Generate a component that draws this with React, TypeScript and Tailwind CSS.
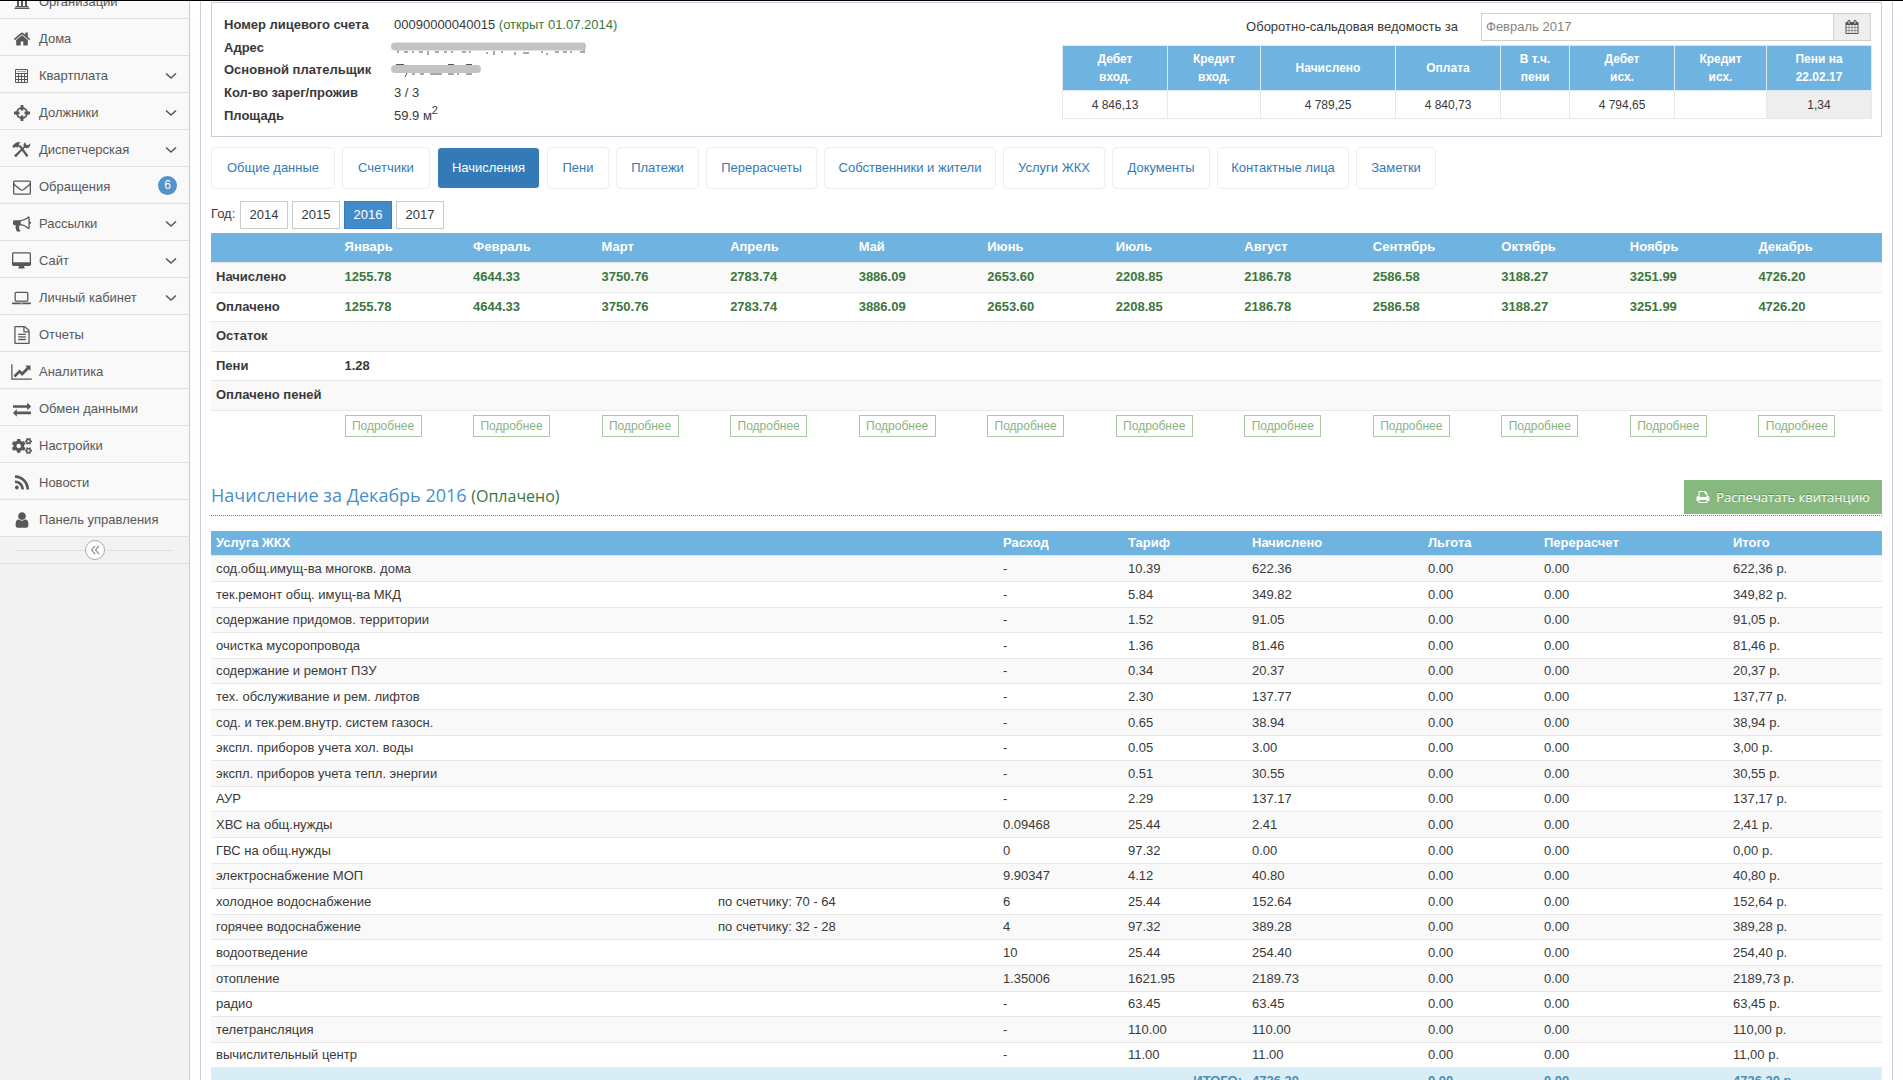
import React, { useState } from 'react';
import { FaCogs, FaUniversity } from 'react-icons/fa';

type IconProps = {
  path: string;
  viewBox?: string;
  className?: string;
};

type MenuItem = {
  title: string;
  icon: React.ReactNode;
  opens?: boolean;
  badge?: number;
};

type Service = {
  name: string;
  meter?: string;
  usage: string;
  tariff: string;
  charged: string;
};

const Icon: React.FC<IconProps> = ({ path, viewBox = '0 0 1792 1792', className = 'size-[18px]' }) => (
  <svg viewBox={viewBox} className={className} fill="currentColor" aria-hidden="true">
    <path d={path} />
  </svg>
);

const paths = {
  home: 'M1472 992v480q0 26-19 45t-45 19h-384v-384h-256v384h-384q-26 0-45-19t-19-45v-480q0-1 .5-3t.5-3l575-474 575 474q1 2 1 6zm223-69l-62 74q-8 9-21 11h-3q-13 0-21-7l-692-577-692 577q-12 8-24 7-13-2-21-11l-62-74q-8-10-7-23.5t11-21.5l719-599q32-26 76-26t76 26l244 204v-195q0-14 9-23t23-9h192q14 0 23 9t9 23v408l219 182q10 8 11 21.5t-7 23.5z',
  envelope: 'M1664 1504v-768q-32 36-69 66-268 206-426 338-51 43-83 67t-86.5 48.5-102.5 24.5h-2q-48 0-102.5-24.5t-86.5-48.5-83-67q-158-132-426-338-37-30-69-66v768q0 13 9.5 22.5t22.5 9.5h1472q13 0 22.5-9.5t9.5-22.5zm0-1051v-24.5l-.5-13-3-12.5-5.5-9-9-7.5-14-2.5h-1472q-13 0-22.5 9.5t-9.5 22.5q0 168 147 284 193 152 401 317 6 5 35 29.5t46 37.5 44.5 31.5 50.5 27.5 43 9h2q20 0 43-9t50.5-27.5 44.5-31.5 46-37.5 35-29.5q208-165 401-317 54-43 100.5-115.5t46.5-131.5zm128-37v1088q0 66-47 113t-113 47h-1472q-66 0-113-47t-47-113v-1088q0-66 47-113t113-47h1472q66 0 113 47t47 113z',
  bullhorn: 'M1664 640q53 0 90.5 37.5t37.5 90.5-37.5 90.5-90.5 37.5v384q0 52-38 90t-90 38q-417-347-812-380-58 19-91 66t-31 100.5 40 92.5q-20 33-23 65.5t6 58 33.5 55 48 50 61.5 50.5q-29 58-111.5 83t-168.5 11.5-132-55.5q-7-23-29.5-87.5t-32-94.5-23-89-15-101 3.5-98.5 22-110.5h-122q-66 0-113-47t-47-113v-192q0-66 47-113t113-47h480q435 0 896-384 52 0 90 38t38 90v384zm-128 604v-954q-394 302-768 343v270q377 42 768 341z',
  desktop: 'M1728 992v-832q0-13-9.5-22.5t-22.5-9.5h-1600q-13 0-22.5 9.5t-9.5 22.5v832q0 13 9.5 22.5t22.5 9.5h1600q13 0 22.5-9.5t9.5-22.5zm128-832v1088q0 66-47 113t-113 47h-544q0 37 16 77.5t32 71 16 43.5q0 26-19 45t-45 19h-512q-26 0-45-19t-19-45q0-14 16-44t32-70 16-78h-544q-66 0-113-47t-47-113v-1088q0-66 47-113t113-47h1600q66 0 113 47t47 113z',
  laptop: 'M416 1280q-66 0-113-47t-47-113v-704q0-66 47-113t113-47h1088q66 0 113 47t47 113v704q0 66-47 113t-113 47h-1088zm-32-864v704q0 13 9.5 22.5t22.5 9.5h1088q13 0 22.5-9.5t9.5-22.5v-704q0-13-9.5-22.5t-22.5-9.5h-1088q-13 0-22.5 9.5t-9.5 22.5zm1376 928h160v96q0 40-47 68t-113 28h-1600q-66 0-113-28t-47-68v-96h1760zm-720 96q16 0 16-16t-16-16h-160q-16 0-16 16t16 16h160z',
  file: 'M1596 380q28 28 48 76t20 88v1152q0 40-28 68t-68 28h-1344q-40 0-68-28t-28-68v-1600q0-40 28-68t68-28h896q40 0 88 20t76 48zm-444-244v376h376q-10-29-22-41l-313-313q-12-12-41-22zm384 1528v-1024h-416q-40 0-68-28t-28-68v-416h-768v1536h1280zm-1024-864q0-14 9-23t23-9h704q14 0 23 9t9 23v64q0 14-9 23t-23 9h-704q-14 0-23-9t-9-23v-64zm736 224q14 0 23 9t9 23v64q0 14-9 23t-23 9h-704q-14 0-23-9t-9-23v-64q0-14 9-23t23-9h704zm0 256q14 0 23 9t9 23v64q0 14-9 23t-23 9h-704q-14 0-23-9t-9-23v-64q0-14 9-23t23-9h704z',
  chart: 'M2048 1536v128h-2048v-1536h128v1408h1920zm-128-1248v435q0 21-19.5 29.5t-35.5-7.5l-121-121-633 633q-10 10-23 10t-23-10l-233-233-416 416-192-192 585-585q10-10 23-10t23 10l233 233 464-464-121-121q-16-16-7.5-35.5t29.5-19.5h435q14 0 23 9t9 23z',
  exchange: 'M1792 1184v192q0 13-9.5 22.5t-22.5 9.5h-1376v192q0 13-9.5 22.5t-22.5 9.5q-12 0-24-10l-319-320q-9-9-9-22 0-14 9-23l320-320q9-9 23-9 13 0 22.5 9.5t9.5 22.5v192h1376q13 0 22.5 9.5t9.5 22.5zm0-544q0 14-9 23l-320 320q-9 9-23 9-13 0-22.5-9.5t-9.5-22.5v-192h-1376q-13 0-22.5-9.5t-9.5-22.5v-192q0-13 9.5-22.5t22.5-9.5h1376v-192q0-14 9-23t23-9q12 0 24 10l319 319q9 9 9 23z',
  rss: 'M576 1344q0 80-56 136t-136 56-136-56-56-136 56-136 136-56 136 56 56 136zm512 123q2 28-17 48-18 21-47 21h-135q-25 0-43-16.5t-20-41.5q-22-229-184.5-391.5t-391.5-184.5q-25-2-41.5-20t-16.5-43v-135q0-29 21-47 17-17 43-17h5q160 13 306 80.5t259 181.5q114 113 181.5 259t80.5 306zm512 2q2 27-18 47-18 20-46 20h-143q-26 0-44.5-17.5t-19.5-42.5q-12-215-101-408.5t-231.5-336-336-231.5-408.5-102q-25-1-42.5-19.5t-17.5-43.5v-143q0-28 20-46 18-18 44-18h3q262 13 501.5 120t425.5 294q187 186 294 425.5t120 501.5z',
  user: 'M1536 1399q0 109-62.5 187t-150.5 78h-854q-88 0-150.5-78t-62.5-187q0-85 8.5-160.5t31.5-152 58.5-131 94-89 134.5-34.5q131 128 313 128t313-128q76 0 134.5 34.5t94 89 58.5 131 31.5 152 8.5 160.5zm-256-887q0 159-112.5 271.5t-271.5 112.5-271.5-112.5-112.5-271.5 112.5-271.5 271.5-112.5 271.5 112.5 112.5 271.5z',
  print: 'M448 1536h896v-256h-896v256zm0-640h896v-384h-160q-40 0-68-28t-28-68v-160h-640v640zm1152 64q0-26-19-45t-45-19-45 19-19 45 19 45 45 19 45-19 19-45zm128 0v416q0 13-9.5 22.5t-22.5 9.5h-224v160q0 40-28 68t-68 28h-960q-40 0-68-28t-28-68v-160h-224q-13 0-22.5-9.5t-9.5-22.5v-416q0-79 56.5-135.5t135.5-56.5h64v-544q0-40 28-68t68-28h672q40 0 88 20t76 48l152 152q28 28 48 76t20 88v256h64q79 0 135.5 56.5t56.5 135.5z',
  calendar: 'M192 1664h288v-288h-288v288zm352 0h320v-288h-320v288zm-352-352h288v-320h-288v320zm352 0h320v-320h-320v320zm-352-384h288v-288h-288v288zm736 736h320v-288h-320v288zm-384-736h320v-288h-320v288zm768 736h288v-288h-288v288zm-384-352h320v-320h-320v320zm-352-864v-288q0-13-9.5-22.5t-22.5-9.5h-64q-13 0-22.5 9.5t-9.5 22.5v288q0 13 9.5 22.5t22.5 9.5h64q13 0 22.5-9.5t9.5-22.5zm736 864h288v-320h-288v320zm-384-384h320v-288h-320v288zm384 0h288v-288h-288v288zm32-480v-288q0-13-9.5-22.5t-22.5-9.5h-64q-13 0-22.5 9.5t-9.5 22.5v288q0 13 9.5 22.5t22.5 9.5h64q13 0 22.5-9.5t9.5-22.5zm384-64v1280q0 52-38 90t-90 38h-1408q-52 0-90-38t-38-90v-1280q0-52 38-90t90-38h128v-96q0-66 47-113t113-47h64q66 0 113 47t47 113v96h384v-96q0-66 47-113t113-47h64q66 0 113 47t47 113v96h128q52 0 90 38t38 90z',
};

const CalculatorIcon = () => (
  <svg viewBox="0 0 13 14" className="h-[14px] w-[13px]" fill="none" stroke="currentColor" aria-hidden="true">
    <path d="M.5 .5h12v13h-12zM.5 4.5h12M1 7.5h11M1 10.5h11M3.5 5v8M6.5 5v8M9.5 5v8" />
    <path d="M2 2.5h9" strokeOpacity=".5" />
  </svg>
);

const TargetIcon = () => (
  <svg viewBox="0 0 16 16" className="size-4" fill="none" stroke="currentColor" aria-hidden="true">
    <circle cx="8" cy="8" r="5.2" strokeWidth="1.7" />
    <path d="M8 0v5.5M8 10.5V16M0 8h5.5M10.5 8H16" strokeWidth="2.8" />
  </svg>
);

const ToolsIcon = () => (
  <svg viewBox="0 0 58 52" className="h-[17px] w-[19px]" fill="currentColor" aria-hidden="true">
    <path d="M1 15l6-6Q15 1 27 4q-5 2-6 6l3 4-7 7-4-3-5 1-3 3z" />
    <path d="M21 17l5-5 24 32-5 6z" />
    <path d="M43 3q-8 2-8 11l1 3L6 44l6 6 27-29q8 3 14-3 4-4 3-11l-7 6-7-2-1-6z" />
  </svg>
);

const ChevronIcon = () => (
  <svg viewBox="0 0 12 8" className="ml-auto h-2 w-3" fill="none" stroke="currentColor" strokeWidth="1.6" aria-hidden="true">
    <path d="M1 1.5l5 4.5 5-4.5" />
  </svg>
);

const menu: MenuItem[] = [
  { title: 'Организации', icon: <FaUniversity className="size-4" /> },
  { title: 'Дома', icon: <Icon path={paths.home} /> },
  { title: 'Квартплата', icon: <CalculatorIcon />, opens: true },
  { title: 'Должники', icon: <TargetIcon />, opens: true },
  { title: 'Диспетчерская', icon: <ToolsIcon />, opens: true },
  { title: 'Обращения', icon: <Icon path={paths.envelope} />, badge: 6 },
  { title: 'Рассылки', icon: <Icon path={paths.bullhorn} />, opens: true },
  { title: 'Сайт', icon: <Icon path={paths.desktop} viewBox="-64 0 1920 1792" className="h-[18px] w-[19px]" />, opens: true },
  { title: 'Личный кабинет', icon: <Icon path={paths.laptop} viewBox="0 0 1920 1792" className="h-[18px] w-[19px]" />, opens: true },
  { title: 'Отчеты', icon: <Icon path={paths.file} /> },
  { title: 'Аналитика', icon: <Icon path={paths.chart} viewBox="0 0 2048 1792" className="h-[18px] w-[21px]" /> },
  { title: 'Обмен данными', icon: <Icon path={paths.exchange} /> },
  { title: 'Настройки', icon: <FaCogs className="size-5" /> },
  { title: 'Новости', icon: <Icon path={paths.rss} /> },
  { title: 'Панель управления', icon: <Icon path={paths.user} /> },
];

const tabs = [
  { title: 'Общие данные', width: 'w-[124px]' },
  { title: 'Счетчики', width: 'w-[88px]' },
  { title: 'Начисления', width: 'w-[103px]' },
  { title: 'Пени', width: 'w-[62px]' },
  { title: 'Платежи', width: 'w-[83px]' },
  { title: 'Перерасчеты', width: 'w-[111px]' },
  { title: 'Собственники и жители', width: 'w-[172px]' },
  { title: 'Услуги ЖКХ', width: 'w-[102px]' },
  { title: 'Документы', width: 'w-[98px]' },
  { title: 'Контактные лица', width: 'w-[132px]' },
  { title: 'Заметки', width: 'w-[80px]' },
];

const years = ['2014', '2015', '2016', '2017'];

const months = [
  { name: 'Январь', sum: '1255.78', fine: '1.28' },
  { name: 'Февраль', sum: '4644.33' },
  { name: 'Март', sum: '3750.76' },
  { name: 'Апрель', sum: '2783.74' },
  { name: 'Май', sum: '3886.09' },
  { name: 'Июнь', sum: '2653.60' },
  { name: 'Июль', sum: '2208.85' },
  { name: 'Август', sum: '2186.78' },
  { name: 'Сентябрь', sum: '2586.58' },
  { name: 'Октябрь', sum: '3188.27' },
  { name: 'Ноябрь', sum: '3251.99' },
  { name: 'Декабрь', sum: '4726.20' },
];

const services: Service[] = [
  { name: 'сод.общ.имущ-ва многокв. дома', usage: '-', tariff: '10.39', charged: '622.36' },
  { name: 'тек.ремонт общ. имущ-ва МКД', usage: '-', tariff: '5.84', charged: '349.82' },
  { name: 'содержание придомов. территории', usage: '-', tariff: '1.52', charged: '91.05' },
  { name: 'очистка мусоропровода', usage: '-', tariff: '1.36', charged: '81.46' },
  { name: 'содержание и ремонт ПЗУ', usage: '-', tariff: '0.34', charged: '20.37' },
  { name: 'тех. обслуживание и рем. лифтов', usage: '-', tariff: '2.30', charged: '137.77' },
  { name: 'сод. и тек.рем.внутр. систем газосн.', usage: '-', tariff: '0.65', charged: '38.94' },
  { name: 'экспл. приборов учета хол. воды', usage: '-', tariff: '0.05', charged: '3.00' },
  { name: 'экспл. приборов учета тепл. энергии', usage: '-', tariff: '0.51', charged: '30.55' },
  { name: 'АУР', usage: '-', tariff: '2.29', charged: '137.17' },
  { name: 'ХВС на общ.нужды', usage: '0.09468', tariff: '25.44', charged: '2.41' },
  { name: 'ГВС на общ.нужды', usage: '0', tariff: '97.32', charged: '0.00' },
  { name: 'электроснабжение МОП', usage: '9.90347', tariff: '4.12', charged: '40.80' },
  { name: 'холодное водоснабжение', meter: 'по счетчику: 70 - 64', usage: '6', tariff: '25.44', charged: '152.64' },
  { name: 'горячее водоснабжение', meter: 'по счетчику: 32 - 28', usage: '4', tariff: '97.32', charged: '389.28' },
  { name: 'водоотведение', usage: '10', tariff: '25.44', charged: '254.40' },
  { name: 'отопление', usage: '1.35006', tariff: '1621.95', charged: '2189.73' },
  { name: 'радио', usage: '-', tariff: '63.45', charged: '63.45' },
  { name: 'телетрансляция', usage: '-', tariff: '110.00', charged: '110.00' },
  { name: 'вычислительный центр', usage: '-', tariff: '11.00', charged: '11.00' },
];

const Sidebar = () => (
  <aside className="w-[190px] shrink-0 overflow-hidden border-r border-[#ccc] bg-[#f2f2f2] text-[#585858]">
    {/* The list is scrolled a little under the top edge */}
    <nav className="-mt-[19px]">
      <ul>
        {menu.map((item) => (
          <li key={item.title} className="border-b border-[#e0e0e0] bg-[#f9f9f9]">
            <a href="#" className="flex h-9 items-center pt-[3px] pr-3">
              <span className="flex w-[39px] shrink-0 items-center justify-center pl-1">{item.icon}</span>
              <span className="whitespace-nowrap">{item.title}</span>
              {item.opens && <ChevronIcon />}
              {item.badge && (
                <span className="mb-[3px] ml-auto flex size-[19px] items-center justify-center rounded-full bg-[#5293c9] text-xs text-white">
                  {item.badge}
                </span>
              )}
            </a>
          </li>
        ))}
      </ul>
    </nav>
    <div className="flex h-[27px] items-center border-b border-[#e0e0e0] px-[15px]">
      <span className="h-px grow bg-[#e0e0e0]" />
      <button type="button" aria-label="Свернуть меню" className="flex size-5 items-center justify-center rounded-full border border-[#aaa] bg-white text-[#999]">
        <svg viewBox="0 0 10 10" className="size-[10px]" fill="none" stroke="currentColor" strokeWidth="1.3" aria-hidden="true">
          <path d="M5 1L1.500 5 5 9M9 1L5.500 5 9 9" />
        </svg>
      </button>
      <span className="h-px grow bg-[#e0e0e0]" />
    </div>
  </aside>
);

const AccountInfo = () => (
  <dl className="grid h-[113px] grid-cols-[170px_auto] grid-rows-5 items-center">
    <dt className="font-bold">Номер лицевого счета</dt>
    <dd>
      00090000040015 <span className="text-[#3c763d]">(открыт 01.07.2014)</span>
    </dd>
    <dt className="font-bold">Адрес</dt>
    <dd>
      {/* Hidden personal data */}
      <svg viewBox="0 0 198 14" className="-ml-1 h-[14px] w-[198px]" aria-label="Адрес скрыт">
        <path d="M8 9v3M14 11h4M23 10v2M29 11h4M38 10v5M45 11h4M54 11h3M62 10v2M72 11h4M80 10v2M97 11v2M104 10v4M112 10v2M125 11v3M133 12h6M152 10v2M157 12v2M165 11h4M173 11h4M180 11h2M190 11h5M194 2v8" stroke="#555" />
        <path d="M5 5.500H192" stroke="#c3c3c3" strokeWidth="8" strokeLinecap="round" />
      </svg>
    </dd>
    <dt className="font-bold">Основной плательщик</dt>
    <dd>
      <svg viewBox="0 0 92 14" className="-ml-1 h-[14px] w-[92px]" aria-label="Плательщик скрыт">
        <path d="M6 1.500h8M17 10l-2 4M22 11h3M30 11h4M40 11h12M58 11h6M58 1.500h6M76 1.500h6M76 11h6M68 10v2" stroke="#555" />
        <path d="M5 6H87" stroke="#c3c3c3" strokeWidth="8" strokeLinecap="round" />
      </svg>
    </dd>
    <dt className="font-bold">Кол-во зарег/прожив</dt>
    <dd>3 / 3</dd>
    <dt className="font-bold">Площадь</dt>
    <dd>
      59.9 м<sup className="text-[11px]">2</sup>
    </dd>
  </dl>
);

const Balance = () => {
  const [period, setPeriod] = useState('Февраль 2017');
  const head = 'border border-[#ddeaf3] bg-[#6fb3e0] font-bold text-white';
  const cell = 'h-7 border border-[#e8e8e8]';

  return (
    <div className="-mt-px w-[809px]">
      <div className="flex items-center justify-end">
        <label htmlFor="period" className="pr-[23px]">
          Оборотно-сальдовая ведомость за
        </label>
        <div className="flex h-7 w-[390px] border border-[#d0d0d0]">
          <input
            id="period"
            type="text"
            className="min-w-0 grow px-1 text-[#858585] outline-none"
            value={period}
            onChange={(e) => setPeriod(e.target.value)}
          />
          <button type="button" aria-label="Календарь" className="flex w-[37px] items-center justify-center border-l border-[#d0d0d0] bg-[#eee] text-[#555]">
            <Icon path={paths.calendar} className="size-[14px]" />
          </button>
        </div>
      </div>
      <table className="mt-1 w-full table-fixed border-collapse text-center text-xs">
        <colgroup>
          <col className="w-[105px]" />
          <col className="w-[93px]" />
          <col className="w-[135px]" />
          <col className="w-[105px]" />
          <col className="w-[69px]" />
          <col className="w-[105px]" />
          <col className="w-[92px]" />
          <col className="w-[105px]" />
        </colgroup>
        <thead>
          <tr className="h-[45px] leading-[18px]">
            <th className={head}>Дебет<br />вход.</th>
            <th className={head}>Кредит<br />вход.</th>
            <th className={head}>Начислено</th>
            <th className={head}>Оплата</th>
            <th className={head}>В т.ч.<br />пени</th>
            <th className={head}>Дебет<br />исх.</th>
            <th className={head}>Кредит<br />исх.</th>
            <th className={head}>Пени на<br />22.02.17</th>
          </tr>
        </thead>
        <tbody>
          <tr>
            <td className={cell}>4 846,13</td>
            <td className={cell}></td>
            <td className={cell}>4 789,25</td>
            <td className={cell}>4 840,73</td>
            <td className={cell}></td>
            <td className={cell}>4 794,65</td>
            <td className={cell}></td>
            <td className="h-7 border border-[#e8e8e8] bg-[#eee]">1,34</td>
          </tr>
        </tbody>
      </table>
    </div>
  );
};

const MonthsTable = () => (
  <table className="mt-1 w-full table-fixed border-collapse text-left">
    <thead>
      <tr className="h-[29px] border-b border-[#e4e4e4] bg-[#6fb3e0] text-white">
        <th></th>
        {months.map((month) => (
          <th key={month.name} className="px-[5px] font-bold">{month.name}</th>
        ))}
      </tr>
    </thead>
    <tbody className="font-bold">
      <tr className="h-[30px] border-b border-[#e8e8e8] bg-[#f9f9f9]">
        <th className="px-[5px]">Начислено</th>
        {months.map((month) => (
          <td key={month.name} className="px-[5px] text-[#3c763d]">{month.sum}</td>
        ))}
      </tr>
      <tr className="h-[29px] border-b border-[#e8e8e8]">
        <th className="px-[5px]">Оплачено</th>
        {months.map((month) => (
          <td key={month.name} className="px-[5px] text-[#3c763d]">{month.sum}</td>
        ))}
      </tr>
      <tr className="h-[30px] border-b border-[#e8e8e8] bg-[#f9f9f9]">
        <th className="px-[5px]">Остаток</th>
        <td colSpan={12}></td>
      </tr>
      <tr className="h-[29px] border-b border-[#e8e8e8]">
        <th className="px-[5px]">Пени</th>
        {months.map((month) => (
          <td key={month.name} className="px-[5px]">{month.fine}</td>
        ))}
      </tr>
      <tr className="h-[30px] border-b border-[#e8e8e8] bg-[#f9f9f9]">
        <th className="px-[5px] whitespace-nowrap">Оплачено пеней</th>
        <td colSpan={12}></td>
      </tr>
      <tr>
        <td></td>
        {months.map((month) => (
          <td key={month.name} className="px-[5px] pt-1 font-normal">
            <button type="button" className="block h-[22px] w-[77px] border border-[#a9c9a4] text-xs text-[#8ab383]">
              Подробнее
            </button>
          </td>
        ))}
      </tr>
    </tbody>
  </table>
);

const ServicesTable = () => (
  <table className="mt-[15px] w-full table-fixed border-collapse text-left">
    <colgroup>
      <col />
      <col className="w-[285px]" />
      <col className="w-[125px]" />
      <col className="w-[124px]" />
      <col className="w-[176px]" />
      <col className="w-[116px]" />
      <col className="w-[189px]" />
      <col className="w-[154px]" />
    </colgroup>
    <thead>
      <tr className="h-[25px] border-b border-[#e4e4e4] bg-[#6fb3e0] text-white">
        <th className="px-[5px]" colSpan={2}>Услуга ЖКХ</th>
        <th className="px-[5px]">Расход</th>
        <th className="px-[5px]">Тариф</th>
        <th className="px-[5px]">Начислено</th>
        <th className="px-[5px]">Льгота</th>
        <th className="px-[5px]">Перерасчет</th>
        <th className="px-[5px]">Итого</th>
      </tr>
    </thead>
    <tbody>
      {services.map((service) => (
        <tr
          key={service.name}
          className="h-[26px] border-b border-[#e8e8e8] odd:bg-[#f9f9f9] nth-[5n]:h-[25px] nth-[5n+3]:h-[25px]"
        >
          <td className="px-[5px]">{service.name}</td>
          <td className="px-[5px]">{service.meter}</td>
          <td className="px-[5px]">{service.usage}</td>
          <td className="px-[5px]">{service.tariff}</td>
          <td className="px-[5px]">{service.charged}</td>
          <td className="px-[5px]">0.00</td>
          <td className="px-[5px]">0.00</td>
          <td className="px-[5px]">{service.charged.replace('.', ',')} р.</td>
        </tr>
      ))}
    </tbody>
    <tfoot>
      <tr className="h-[26px] bg-[#d9edf7] font-bold text-[#4b8db5]">
        <td className="px-[5px] text-right" colSpan={4}>ИТОГО:</td>
        <td className="px-[5px]">4726.20</td>
        <td className="px-[5px]">0.00</td>
        <td className="px-[5px]">0.00</td>
        <td className="px-[5px]">4726.20 р.</td>
      </tr>
    </tfoot>
  </table>
);

const App: React.FC = () => {
  const [tab, setTab] = useState('Начисления');
  const [year, setYear] = useState('2016');

  return (
    <div className="flex min-h-screen overflow-hidden border-t border-black bg-white font-['Liberation_Sans',Arial,sans-serif] text-[13px] leading-5 text-[#393939]">
      <Sidebar />
      <main className="mx-[10px] min-w-0 grow border-x border-[#c5d0dc] px-[10px] pt-px">
        <section className="flex justify-between border border-[#c5d0dc] pt-[11px] pr-[10px] pb-[9px] pl-3">
          <AccountInfo />
          <Balance />
        </section>

        {/* Tabs */}
        <nav className="mt-[10px] flex gap-[7px]">
          {tabs.map(({ title, width }) => (
            <button
              key={title}
              type="button"
              onClick={() => setTab(title)}
              className={`h-[42px] rounded border whitespace-nowrap ${width} ${
                title === tab ? 'border-white bg-[#337ab7] text-white' : 'border-[#eee] text-[#337ab7]'
              }`}
            >
              {title}
            </button>
          ))}
        </nav>

        {/* Year */}
        <div className="mt-3 flex gap-1">
          <span className="w-[25px] leading-[26px]">Год:</span>
          {years.map((item) => (
            <button
              key={item}
              type="button"
              onClick={() => setYear(item)}
              className={
                item === year
                  ? 'h-7 w-12 border border-[#357ebd] bg-[#428bca] text-white'
                  : 'h-7 w-12 border border-[#ccc]'
              }
            >
              {item}
            </button>
          ))}
        </div>

        <MonthsTable />

        <header className="mt-[43px] flex items-center justify-between border-b border-dotted border-[#478fa5] pb-px font-['Open_Sans',sans-serif]">
          <h4 className="pb-[3px] text-lg text-[#478fca]">
            Начисление за Декабрь 2016 <span className="text-base text-[#3c763d]">(Оплачено)</span>
          </h4>
          <button
            type="button"
            className="flex h-[34px] w-[198px] items-center justify-center gap-[6px] bg-[#87b87f] text-[13px] whitespace-nowrap text-white [text-shadow:0_-1px_0_rgba(0,0,0,0.25)]"
          >
            <Icon path={paths.print} className="size-[14px]" />
            Распечатать квитанцию
          </button>
        </header>

        <ServicesTable />
      </main>
    </div>
  );
};

export default App;
